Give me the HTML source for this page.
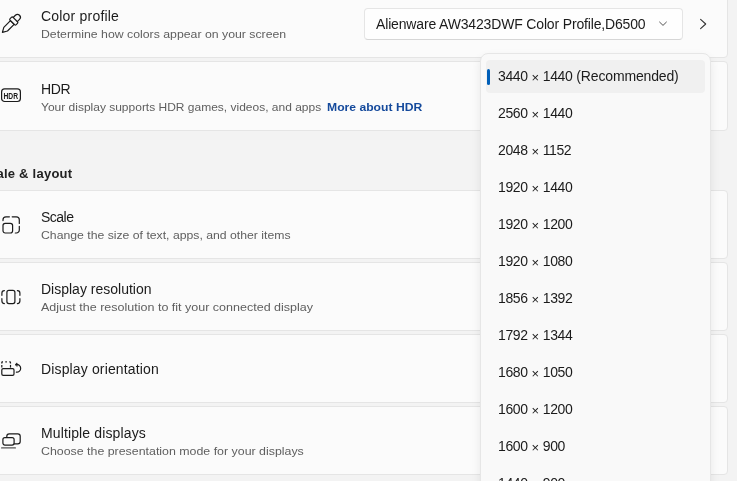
<!DOCTYPE html>
<html><head><meta charset="utf-8">
<style>
*{margin:0;padding:0;box-sizing:border-box;}
html,body{width:737px;height:481px;overflow:hidden;background:#f3f3f3;font-family:"Liberation Sans",sans-serif;color:#1a1a1a;}
.card{position:absolute;left:-20px;width:748px;background:#fbfbfb;border:1px solid #e5e5e5;border-radius:4px;}
.t{position:absolute;will-change:transform;left:41px;font-size:14px;color:#1b1b1b;white-space:nowrap;}
.s{position:absolute;left:41px;font-size:11px;transform-origin:0 0;will-change:transform;color:#5f5f5f;white-space:nowrap;}
.ic{position:absolute;left:0;}
.hdr{position:absolute;left:0;top:166px;font-size:13px;font-weight:bold;color:#222;letter-spacing:0.25px;will-change:transform;}
.dd{position:absolute;left:364px;top:8px;width:319px;height:32px;background:#fefefe;border:1px solid #e5e5e5;border-bottom-color:#d6d6d6;border-radius:4px;}
.pop{position:absolute;left:480px;top:53px;width:231px;height:440px;background:#f9f9f9;border:1px solid #e6e6e6;border-radius:8px;box-shadow:0 4px 10px rgba(0,0,0,0.08);}
.it{position:absolute;will-change:transform;left:498px;font-size:14px;letter-spacing:-0.4px;word-spacing:0.5px;color:#1b1b1b;white-space:nowrap;}
.sel{position:absolute;left:486px;top:60px;width:219px;height:33px;background:#f0f0f0;border-radius:4px;}
.it i{font-style:normal;font-size:13px;position:relative;top:1px;}
.it u{text-decoration:none;letter-spacing:-0.15px;}
.bar{position:absolute;left:487px;top:69px;width:3px;height:16px;background:#005fb8;border-radius:2px;}
</style></head><body>
<!-- cards -->
<div class="card" style="top:-20px;height:78px;"></div>
<div class="card" style="top:61px;height:70px;"></div>
<div class="card" style="top:190px;height:69px;"></div>
<div class="card" style="top:262px;height:69px;"></div>
<div class="card" style="top:334px;height:69px;"></div>
<div class="card" style="top:406px;height:69px;"></div>

<div class="t" style="top:8px;letter-spacing:0.2px;">Color profile</div>
<div class="s" style="top:28px;transform:scaleX(1.117);">Determine how colors appear on your screen</div>

<div class="t" style="top:81px;letter-spacing:-0.4px;">HDR</div>
<div class="s" style="top:101px;transform:scaleX(1.09);">Your display supports HDR games, videos, and apps</div>
<div class="s" style="left:327px;top:101px;font-weight:bold;color:#154a9c;transform:scaleX(1.105);">More about HDR</div>

<div class="hdr" style="left:-20.5px;">Scale &amp; layout</div>

<div class="t" style="top:209px;letter-spacing:-0.5px;">Scale</div>
<div class="s" style="top:229px;transform:scaleX(1.112);">Change the size of text, apps, and other items</div>

<div class="t" style="top:281px;">Display resolution</div>
<div class="s" style="top:301px;transform:scaleX(1.138);">Adjust the resolution to fit your connected display</div>

<div class="t" style="top:361px;letter-spacing:0.14px;">Display orientation</div>

<div class="t" style="top:425px;letter-spacing:0.13px;">Multiple displays</div>
<div class="s" style="top:445px;transform:scaleX(1.125);">Choose the presentation mode for your displays</div>


<svg style="position:absolute;left:0;top:0;" width="40" height="481" viewBox="0 0 40 481" fill="none" stroke="#1b1b1b" stroke-width="1.2" stroke-linecap="round" stroke-linejoin="round">
 <!-- eyedropper -->
 <g transform="translate(2.4,32.4) rotate(45)">
  <path d="M0 0 L-2.6 -4.6 L-2.6 -14 L2.6 -14 L2.6 -4.6 Z"/>
  <rect x="-4.3" y="-18.2" width="8.6" height="4.2" rx="1.2"/>
  <path d="M-2.9 -18.2 L-2.9 -21.3 A2.9 2.9 0 0 1 2.9 -21.3 L2.9 -18.2"/>
 </g>
 <!-- HDR -->
 <rect x="1.6" y="88.9" width="18.8" height="12.6" rx="3"/>
 <text x="3.5" y="98.6" font-family="Liberation Sans" font-weight="bold" font-size="8.2" fill="#1b1b1b" stroke="none" textLength="14.6" lengthAdjust="spacingAndGlyphs">HDR</text>
 <!-- scale -->
 <path d="M3 220.6 V219.8 A3 3 0 0 1 6 216.8 H9.4"/>
 <path d="M12.2 216.8 H16.3 A3 3 0 0 1 19.3 219.8 V223.4"/>
 <path d="M19.3 226.3 V230 A3 3 0 0 1 16.3 233 H15.3"/>
 <rect x="3" y="223.4" width="9.6" height="9.6" rx="2.2"/>
 <!-- display resolution -->
 <rect x="6.9" y="290.4" width="8" height="13.2" rx="2"/>
 <path d="M4.4 290.6 A2.5 2.5 0 0 0 1.9 293.1 V295.3"/>
 <path d="M1.9 298.7 V301.1 A2.5 2.5 0 0 0 4.4 303.6"/>
 <path d="M17.4 290.6 A2.5 2.5 0 0 1 19.9 293.1 V295.3"/>
 <path d="M19.9 298.7 V301.1 A2.5 2.5 0 0 1 17.4 303.6"/>
 <!-- orientation -->
 <rect x="1.8" y="368.6" width="12.2" height="6.8" rx="1.4"/>
 <path d="M1.8 363.6 V362.5 A0.6 0.6 0 0 1 2.4 361.9 H3" stroke-linecap="butt"/>
 <path d="M5.3 361.9 H6.9" stroke-linecap="butt"/>
 <path d="M9.3 361.9 H9.9 A0.6 0.6 0 0 1 10.5 362.5 V363.6" stroke-linecap="butt"/>
 <path d="M1.8 364.9 V367.6" stroke-linecap="butt"/>
 <path d="M10.5 364.9 V367.6" stroke-linecap="butt"/>
 <path d="M16.4 372.2 A3.9 3.9 0 1 0 16.0 364.5"/>
 <path d="M15.3 364.5 L17.0 362.9 L17.2 366.0 Z" fill="#1b1b1b" stroke-width="0.7"/>
 <!-- multiple displays -->
 <rect x="6.8" y="433.8" width="13.4" height="10.1" rx="2.4"/>
 <rect x="2.9" y="437.6" width="11.2" height="7.5" rx="2" fill="#fbfbfb"/>
 <path d="M1.6 447.9 H15.4" stroke="#555"/>
</svg>

<div class="dd"></div>
<div class="t" style="left:376px;top:16px;letter-spacing:-0.16px;">Alienware AW3423DWF Color Profile,D6500</div>
<!-- chevrons -->
<svg style="position:absolute;left:650px;top:10px;" width="70" height="30" fill="none" stroke-linecap="round" stroke-linejoin="round">
 <path d="M9.6 12.1 L13 15.4 L16.4 12.1" stroke="#4a4a4a" stroke-width="0.95"/>
 <path d="M50.6 9.3 L55.7 14 L50.6 18.7" stroke="#333" stroke-width="1.1"/>
</svg>

<div class="pop"></div>
<div class="sel"></div>
<div class="bar"></div>
<div class="it" style="top:68px;">3440 <i>×</i> 1440 <u>(Recommended)</u></div>
<div class="it" style="top:105px;">2560 <i>×</i> 1440</div>
<div class="it" style="top:142px;">2048 <i>×</i> 1152</div>
<div class="it" style="top:179px;">1920 <i>×</i> 1440</div>
<div class="it" style="top:216px;">1920 <i>×</i> 1200</div>
<div class="it" style="top:253px;">1920 <i>×</i> 1080</div>
<div class="it" style="top:290px;">1856 <i>×</i> 1392</div>
<div class="it" style="top:327px;">1792 <i>×</i> 1344</div>
<div class="it" style="top:364px;">1680 <i>×</i> 1050</div>
<div class="it" style="top:401px;">1600 <i>×</i> 1200</div>
<div class="it" style="top:438px;">1600 <i>×</i> 900</div>
<div class="it" style="top:475px;">1440 <i>×</i> 900</div>
</body></html>
